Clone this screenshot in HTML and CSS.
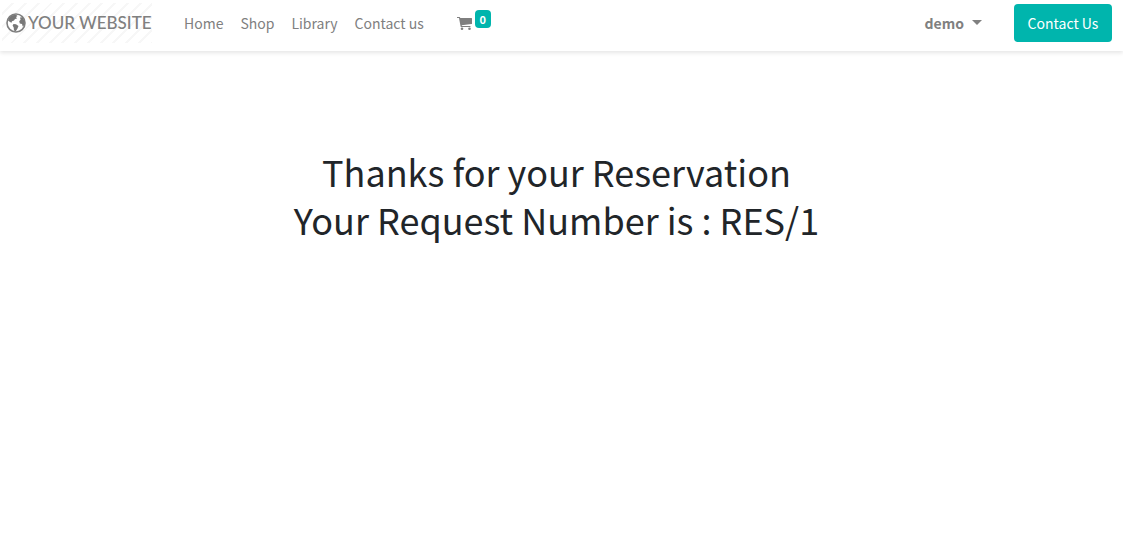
FILE: index.html
```html
<!DOCTYPE html>
<html lang="en">
<head>
<meta charset="utf-8">
<meta name="viewport" content="width=device-width, initial-scale=1">
<title>Reservation</title>
<link rel="stylesheet" href="styles.css">
</head>
<body>
<header class="navbar">
  <a class="brand" href="#">
    <svg class="globe" viewBox="0 0 20 20" aria-hidden="true">
      <circle cx="10" cy="10" r="9" fill="#fff" stroke="#808080" stroke-width="1.600"/>
      <path fill="#777" d="M3 5 6 2.200 10 1.700 11.500 3 10 4 11 5.400 9 6 8 7.600 6 8.300 5.500 9.800 4 9 2 7.500zM7.500 11 10 11.300 12.500 13 11.500 15.500 9.800 18.300 8 17.500 7.700 14.500 6.600 12.500zM14 4.600 16.500 4.300 18.700 8.500 18.500 12 16.700 13.500 16 11 13.800 10.500 13.200 8.300 14.600 6.800z"/>
    </svg>
    <span>YOUR WEBSITE</span>
  </a>
  <nav class="menu" aria-label="Main">
    <a href="#">Home</a>
    <a href="#">Shop</a>
    <a href="#">Library</a>
    <a href="#">Contact us</a>
    <a class="cart" href="#" aria-label="Cart, 0 items">
      <svg class="cart-icon" viewBox="0 0 15 13" aria-hidden="true">
        <path fill="#7f7f7f" d="M0 0h2.500q.6 0 .8 1H14.400q.6 0 .6.600v4.900q0 .5-.5.600L4.700 8.200l.2.900H13q.6 0 .6.500T13 10.100H4.200q-.5 0-.6-.5L2 1H.5Q0 1 0 .5z"/>
        <circle cx="5" cy="11.700" r="1.300" fill="#7f7f7f"/>
        <circle cx="12.500" cy="11.700" r="1.300" fill="#7f7f7f"/>
      </svg>
      <span class="badge">0</span>
    </a>
  </nav>
  <button class="user" type="button">demo<span class="caret"></span></button>
  <a class="cta" href="#">Contact Us</a>
</header>
<main class="content">
  <h1 class="title">Thanks for your Reservation<br>Your Request Number is : RES/1</h1>
</main>
</body>
</html>
```
FILE: styles.css
```css
* {
  box-sizing: border-box;
}

body {
  margin: 0;
  background: #fff;
  color: #212529;
  font-family: "Noto Sans CJK JP", "Noto Sans", sans-serif;
  font-size: 14px;
  line-height: 24px;
}

a {
  color: inherit;
  text-decoration: none;
}

.navbar {
  display: flex;
  align-items: center;
  padding: 3px 11px 8px 2px;
  color: #808080;
  box-shadow: 0 2px 4px rgba(0, 0, 0, 0.1);
}

.brand {
  display: flex;
  align-items: center;
  gap: 2px;
  height: 40px;
  width: 150px;
  padding-left: 4px;
  margin-right: 32px;
  font: 500 17px/24px Lato, sans-serif;
  white-space: nowrap;
  background: repeating-linear-gradient(135deg, #fff 0 7px, #f7f7f7 7px 9px);
}

.globe {
  width: 20px;
  height: 20px;
  flex: none;
}

.menu {
  display: flex;
  align-items: center;
  gap: 17px;
}

.cart {
  display: flex;
  align-items: center;
  gap: 3px;
  margin-left: 16px;
}

.cart-icon {
  width: 15px;
  height: 13px;
}

.badge {
  min-width: 16px;
  padding: 0 4px;
  margin-bottom: 8px;
  border-radius: 4px;
  background: #00b5ad;
  color: #fff;
  font-size: 11px;
  font-weight: 700;
  line-height: 18px;
  text-align: center;
}

.user {
  display: flex;
  align-items: center;
  gap: 8px;
  margin-left: auto;
  padding: 0;
  border: 0;
  background: none;
  color: inherit;
  font: inherit;
  font-weight: 700;
}

.caret {
  border: 5px solid transparent;
  border-top-color: currentColor;
  border-bottom: 0;
  margin-bottom: 2px;
}

.cta {
  min-width: 98px;
  margin-left: 32px;
  padding: 7px 12px;
  border-radius: 4px;
  background: #00b5ad;
  color: #fff;
  text-align: center;
}

.content {
  padding: 96px 10px 32px 0;
}

.title {
  margin: 0;
  font-size: 36px;
  font-weight: 400;
  line-height: 48px;
  text-align: center;
}
```
